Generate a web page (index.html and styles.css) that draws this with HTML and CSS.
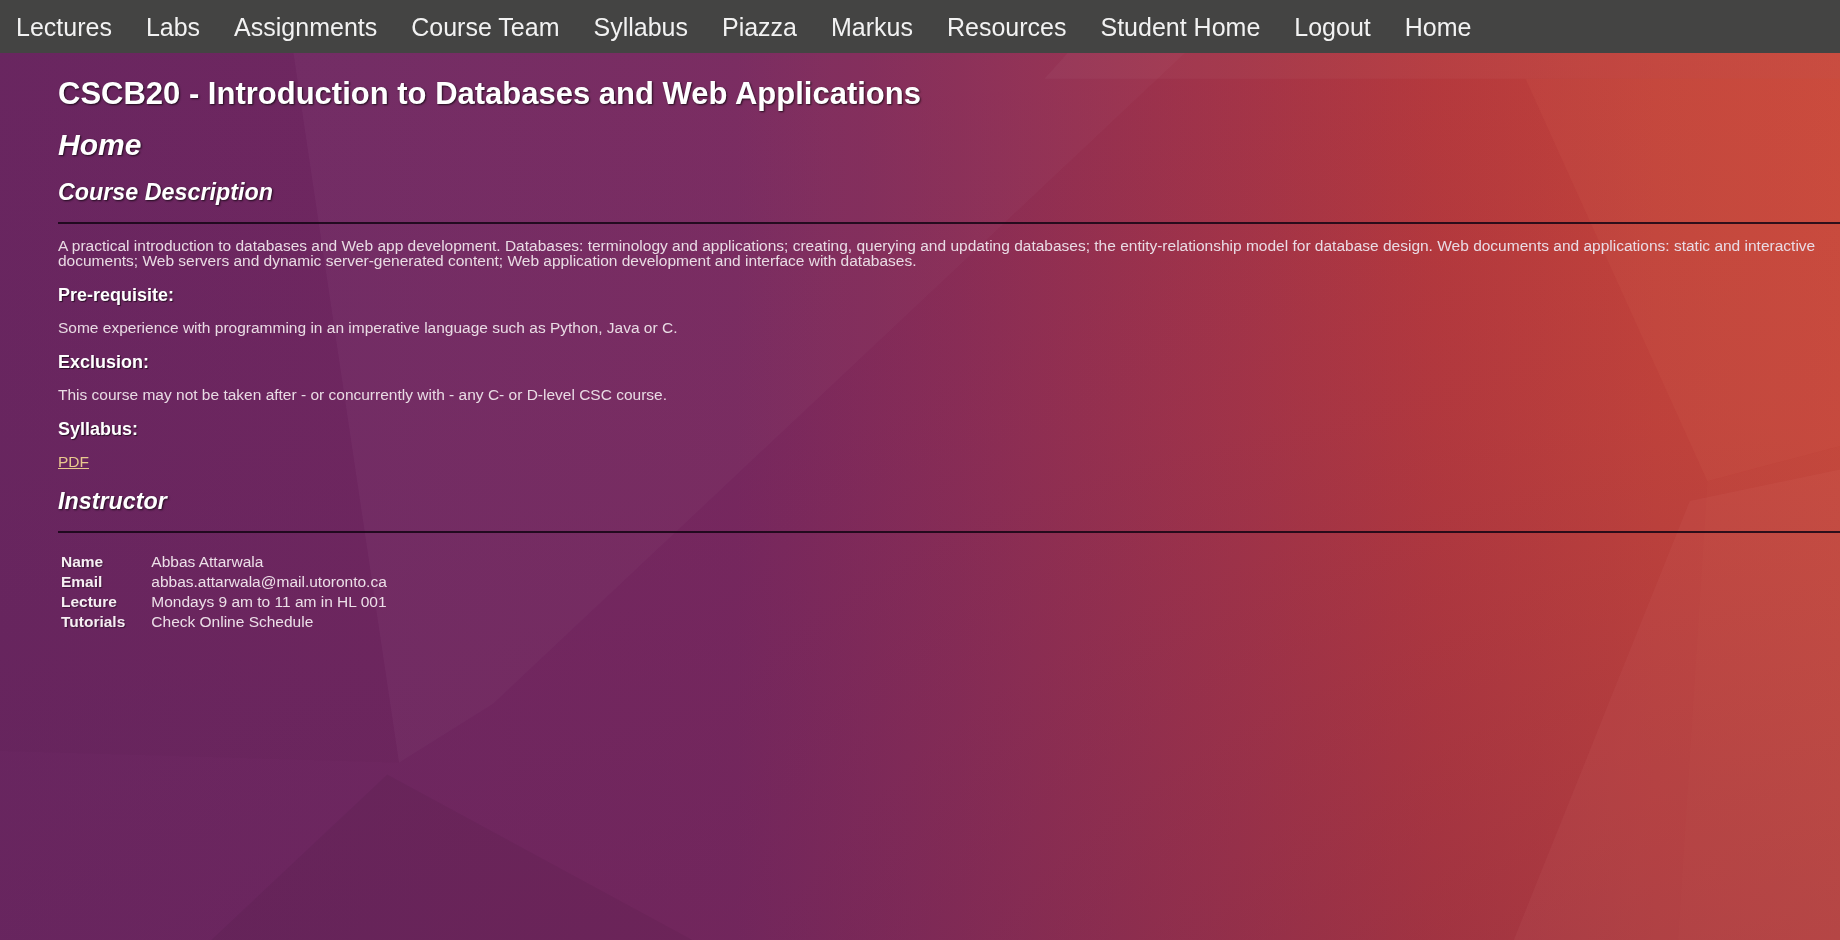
FILE: index.html
```html
<!DOCTYPE html>
<html lang="en">
<head>
<meta charset="utf-8">
<title>CSCB20 - Home</title>
<link rel="stylesheet" href="styles.css">
</head>
<body>
<div class="wallpaper" aria-hidden="true">
  <svg viewBox="0 0 1568 801" preserveAspectRatio="none" width="100%" height="100%">
    <defs>
      <linearGradient id="base" x1="0" y1="0" x2="1" y2="0">
        <stop offset="0" stop-color="#6b2762"/>
        <stop offset="0.2" stop-color="#712862"/>
        <stop offset="0.4" stop-color="#78285f"/>
        <stop offset="0.52" stop-color="#8a2d56"/>
        <stop offset="0.65" stop-color="#a0334a"/>
        <stop offset="0.78" stop-color="#b5393d"/>
        <stop offset="0.9" stop-color="#c3433a"/>
        <stop offset="1" stop-color="#c9483a"/>
      </linearGradient>
      <linearGradient id="shade" x1="0" y1="0" x2="0" y2="1">
        <stop offset="0" stop-color="#5a1f52" stop-opacity="0"/>
        <stop offset="0.45" stop-color="#5a1f52" stop-opacity="0.05"/>
        <stop offset="1" stop-color="#5a1f52" stop-opacity="0.22"/>
      </linearGradient>
    </defs>
    <rect x="0" y="0" width="1568" height="801" fill="url(#base)"/>
    <rect x="0" y="0" width="1568" height="801" fill="url(#shade)"/>
    <polygon points="250,45 1010,45 420,600 340,650" fill="#ffffff" fill-opacity="0.022"/>
    <polygon points="0,45 250,45 340,650 0,640" fill="#000000" fill-opacity="0.015"/>
    <polygon points="180,801 330,660 590,801" fill="#000000" fill-opacity="0.045"/>
    <polygon points="910,45 1568,45 1568,67 890,67" fill="#ffffff" fill-opacity="0.03"/>
    <polygon points="1300,67 1568,67 1568,380 1455,410" fill="#ff9a70" fill-opacity="0.06"/>
    <polygon points="1455,410 1568,380 1568,801 1430,801" fill="#ff9a8a" fill-opacity="0.025"/>
    <polygon points="1440,427 1568,400 1568,801 1290,801" fill="#ffb0b0" fill-opacity="0.05"/>
  </svg>
</div>

<nav class="topnav">
  <a href="#">Lectures</a>
  <a href="#">Labs</a>
  <a href="#">Assignments</a>
  <a href="#">Course Team</a>
  <a href="#">Syllabus</a>
  <a href="#">Piazza</a>
  <a href="#">Markus</a>
  <a href="#">Resources</a>
  <a href="#">Student Home</a>
  <a href="#">Logout</a>
  <a href="#">Home</a>
</nav>

<main class="content">
  <h1 class="course-title">CSCB20 - Introduction to Databases and Web Applications</h1>
  <h2 class="page-title">Home</h2>
  <h3 class="section-title">Course Description</h3>
  <hr class="rule">
  <p class="text">A practical introduction to databases and Web app development. Databases: terminology and applications; creating, querying and updating databases; the entity-relationship model for database design. Web documents and applications: static and interactive documents; Web servers and dynamic server-generated content; Web application development and interface with databases.</p>
  <h4 class="label">Pre-requisite:</h4>
  <p class="text">Some experience with programming in an imperative language such as Python, Java or C.</p>
  <h4 class="label">Exclusion:</h4>
  <p class="text">This course may not be taken after - or concurrently with - any C- or D-level CSC course.</p>
  <h4 class="label">Syllabus:</h4>
  <p class="text link-line"><a class="doc-link" href="#">PDF</a></p>
  <h3 class="section-title">Instructor</h3>
  <hr class="rule rule-table">
  <table class="info">
    <tr><th>Name</th><td>Abbas Attarwala</td></tr>
    <tr><th>Email</th><td>abbas.attarwala@mail.utoronto.ca</td></tr>
    <tr><th>Lecture</th><td>Mondays 9 am to 11 am in HL 001</td></tr>
    <tr><th>Tutorials</th><td>Check Online Schedule</td></tr>
  </table>
</main>
</body>
</html>
```

FILE: styles.css
```css
html, body {
  margin: 0;
  padding: 0;
  height: 100%;
}

body {
  font-family: "Liberation Sans", Arial, Helvetica, sans-serif;
  overflow: hidden;
  color: #e9dbe4;
}

.wallpaper {
  position: fixed;
  inset: 0;
  z-index: -1;
}

.wallpaper svg {
  display: block;
}

.topnav {
  display: flex;
  align-items: center;
  gap: 34px;
  height: 53px;
  padding-left: 16px;
  background: #444443;
}

.topnav a {
  color: #f2f2f2;
  text-decoration: none;
  font-size: 25px;
  line-height: 30px;
  white-space: nowrap;
}

.content {
  padding-left: 58px;
}

.course-title {
  margin: 22.5px 0 16px;
  font-size: 31px;
  line-height: 36px;
  font-weight: bold;
  color: #ffffff;
  text-shadow: 1px 1px 2px rgba(0, 0, 0, 0.7);
}

.page-title {
  margin: 0 0 16px;
  font-size: 30px;
  line-height: 34px;
  font-weight: bold;
  font-style: italic;
  color: #ffffff;
  text-shadow: 1px 1px 2px rgba(0, 0, 0, 0.7);
}

.section-title {
  margin: 0 0 16px;
  font-size: 23.3px;
  line-height: 28px;
  font-weight: bold;
  font-style: italic;
  color: #ffffff;
  text-shadow: 1px 1px 2px rgba(0, 0, 0, 0.7);
}

.rule {
  margin: 0 0 14px;
  height: 0;
  border: 0;
  border-top: 2px solid rgba(20, 5, 20, 0.85);
}

.rule-table {
  margin-bottom: 18px;
}

.text {
  margin: 0 0 17px;
  font-size: 15.5px;
  line-height: 15px;
  color: #e9dbe4;
}

.link-line {
  margin-bottom: 18px;
}

.label {
  margin: 0 0 15px;
  font-size: 18px;
  line-height: 20px;
  font-weight: bold;
  color: #ffffff;
  text-shadow: 1px 1px 1px rgba(0, 0, 0, 0.6);
}

.doc-link {
  color: #e8c98e;
  text-decoration: underline;
}

.info {
  border-spacing: 2px;
  font-size: 15.5px;
  line-height: 16px;
}

.info th,
.info td {
  padding: 1px;
  text-align: left;
  vertical-align: top;
}

.info th {
  padding-right: 23px;
  font-weight: bold;
  color: #f6eef3;
  text-shadow: 1px 1px 1px rgba(0, 0, 0, 0.4);
}

.info td {
  color: #ecdfe8;
}
```
